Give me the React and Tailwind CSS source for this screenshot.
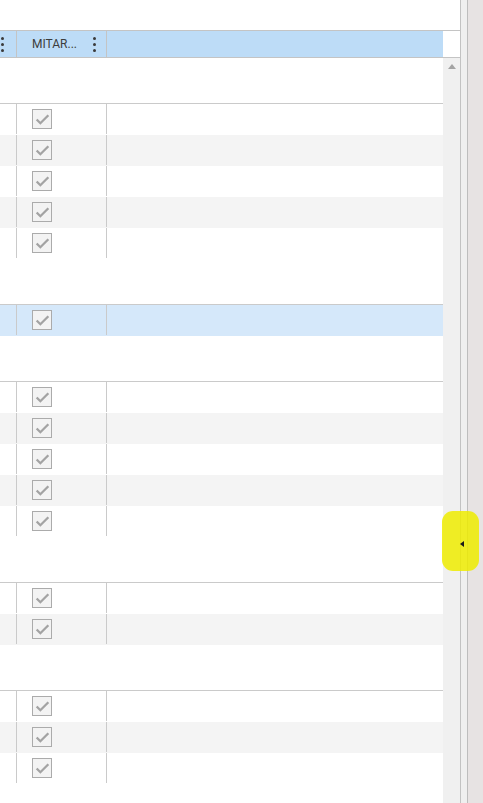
const groups = [
    { rows: 5 },
    { rows: 1, selected: true },
    { rows: 5 },
    { rows: 2 },
    { rows: 3 },
];

const Kebab = () => (
    <div className="flex flex-col items-center gap-[3px]">
        <span className="block w-[3px] h-[3px] rounded-full bg-[#3a3a3a]" />
        <span className="block w-[3px] h-[3px] rounded-full bg-[#3a3a3a]" />
        <span className="block w-[3px] h-[3px] rounded-full bg-[#3a3a3a]" />
    </div>
);

const CheckBox = () => (
    <div className="w-[20px] h-[20px] border border-[#ababab] bg-[#f3f3f3] flex items-center justify-center">
        <svg width="17" height="17" viewBox="0 0 16 16">
            <polyline
                points="2.5,8 6,11.5 13.5,4"
                fill="none"
                stroke="#a3a3a3"
                strokeWidth="2.2"
            />
        </svg>
    </div>
);

const DataRow = ({ index, selected }) => {
    const bg = selected
        ? "bg-[#d5e8fa]"
        : index % 2 === 1
        ? "bg-[#f4f4f4]"
        : "bg-white";
    return (
        <div className={`flex h-[31px] pb-[1px] ${bg}`}>
            <div className="w-[17px] border-r border-[#cacaca]" />
            <div className="w-[90px] border-r border-[#cacaca] flex items-center pl-[15px]">
                <CheckBox />
            </div>
            <div className="flex-1" />
        </div>
    );
};

const App = () => {
    return (
        <div
            className="relative w-[483px] h-[803px] overflow-hidden flex bg-white"
            style={{ fontFamily: "Roboto, 'Liberation Sans', sans-serif" }}
        >
            <div className="w-[460px] flex flex-col">
                <div className="h-[30px] bg-white" />
                <div className="h-[28px] flex border-y border-[#c4c4c4]">
                    <div className="w-[443px] flex bg-[#bddcf7]">
                        <div className="w-[17px] border-r border-[#c4c4c4] flex items-center pl-[1px]">
                            <Kebab />
                        </div>
                        <div className="w-[90px] border-r border-[#c4c4c4] flex items-center pl-[15px] pr-[10px]">
                            <span className="text-[12px] text-[#3c3c3c] flex-1 leading-none">
                                MITAR...
                            </span>
                            <Kebab />
                        </div>
                        <div className="flex-1" />
                    </div>
                    <div className="flex-1 bg-white" />
                </div>
                <div className="flex flex-1 min-h-0">
                    <div className="w-[443px] flex flex-col">
                        {groups.map((g, gi) => (
                            <div key={gi} className="flex flex-col">
                                <div className="h-[46px] border-b border-[#cacaca] bg-white" />
                                {Array.from({ length: g.rows }).map((_, ri) => (
                                    <DataRow
                                        key={ri}
                                        index={ri}
                                        selected={g.selected}
                                    />
                                ))}
                            </div>
                        ))}
                    </div>
                    <div className="flex-1 bg-[#f0f0f0] flex justify-center pt-[6px]">
                        <div className="w-0 h-0 border-l-[4px] border-r-[4px] border-b-[5px] border-l-transparent border-r-transparent border-b-[#a3a3a3]" />
                    </div>
                </div>
            </div>
            <div className="w-[1px] bg-[#c2c2c2]" />
            <div className="w-[6px] bg-[#efefef]" />
            <div className="w-[1px] bg-[#bdbdbd]" />
            <div className="flex-1 bg-[#e7e3e3]" />

            <div className="absolute left-[442px] top-[511px] w-[37px] h-[60px] rounded-[11px] bg-[#efec00]/85 flex items-center justify-center">
                <div className="w-0 h-0 border-t-[3px] border-b-[3px] border-r-[4px] border-t-transparent border-b-transparent border-r-[#1a1a1a] ml-[3px] mt-[6px]" />
            </div>
        </div>
    );
};

export default App;
